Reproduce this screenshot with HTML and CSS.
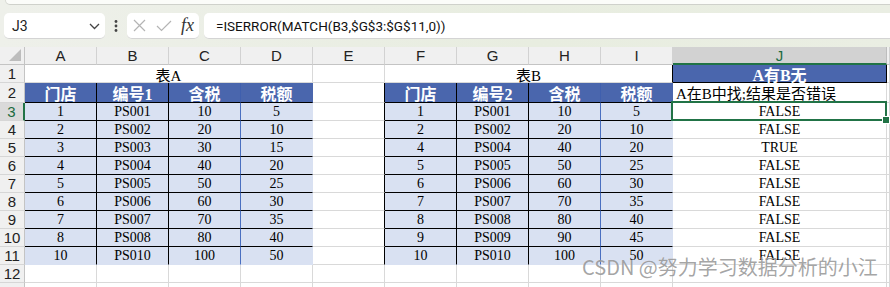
FILE: index.html
```html
<!DOCTYPE html>
<html lang="zh-CN">
<head>
<meta charset="utf-8">
<title>Excel</title>
<link rel="stylesheet" href="styles.css">
</head>
<body>
<div class="app">
  <div class="top">
    <div class="ribbon"></div>
    <div class="fbar">
      <div class="namebox">
        <span class="nb-text">J3</span>
        <svg class="chev" width="11" height="7" viewBox="0 0 11 7"><polyline points="1,1 5.5,5.5 10,1" fill="none" stroke="#444" stroke-width="1.3"/></svg>
      </div>
      <div class="dots">
        <svg width="4" height="12" viewBox="0 0 4 12"><circle cx="2" cy="1.5" r="1.4" fill="#444"/><circle cx="2" cy="6" r="1.4" fill="#444"/><circle cx="2" cy="10.5" r="1.4" fill="#444"/></svg>
      </div>
      <div class="fbtns">
        <svg width="13" height="13" viewBox="0 0 13 13"><path d="M1 1 L12 12 M12 1 L1 12" stroke="#b4b4b4" stroke-width="1.2" fill="none"/></svg>
        <svg width="16" height="12" viewBox="0 0 16 12"><polyline points="1,6 5.5,10.5 15,1" fill="none" stroke="#b4b4b4" stroke-width="1.2"/></svg>
        <span class="fx">fx</span>
      </div>
      <div class="formula">=ISERROR(MATCH(B3,$G$3:$G$11,0))</div>
    </div>
  </div>

  <div class="sheet">
    <!-- column headers -->
    <div class="hd corner"><svg width="12" height="12" viewBox="0 0 12 12"><polygon points="12,0 12,12 0,12" fill="#bdbdbd"/></svg></div>
    <div class="hd">A</div><div class="hd">B</div><div class="hd">C</div><div class="hd">D</div><div class="hd">E</div>
    <div class="hd">F</div><div class="hd">G</div><div class="hd">H</div><div class="hd">I</div><div class="hd hsel">J</div><div class="hd"></div>

    <!-- row 1 -->
    <div class="rh">1</div>
    <div class="c title span4">表A</div>
    <div class="c"></div>
    <div class="c title span4 bk-r">表B</div>
    <div class="c jhead">A有B无</div>
    <div class="c"></div>

    <!-- row 2 -->
    <div class="rh">2</div>
    <div class="c th">门店</div><div class="c th">编号1</div><div class="c th th-c">含税</div><div class="c th th-end">税额</div>
    <div class="c bk-r"></div>
    <div class="c th">门店</div><div class="c th">编号2</div><div class="c th th-c">含税</div><div class="c th th-end">税额</div>
    <div class="c note">A在B中找;结果是否错误</div>
    <div class="c kclip"></div>

    <!-- row 3 -->
    <div class="rh rsel">3</div>
    <div class="c td">1</div><div class="c td">PS001</div><div class="c td bl-r">10</div><div class="c td td-end">5</div>
    <div class="c bk-r"></div>
    <div class="c td">1</div><div class="c td">PS001</div><div class="c td bl-r">10</div><div class="c td td-end">5</div>
    <div class="c val active">FALSE</div>
    <div class="c"></div>

    <!-- row 4 -->
    <div class="rh">4</div>
    <div class="c td">2</div><div class="c td">PS002</div><div class="c td bl-r">20</div><div class="c td td-end">10</div>
    <div class="c bk-r"></div>
    <div class="c td">2</div><div class="c td">PS002</div><div class="c td bl-r">20</div><div class="c td td-end">10</div>
    <div class="c val">FALSE</div>
    <div class="c"></div>

    <!-- row 5 -->
    <div class="rh">5</div>
    <div class="c td">3</div><div class="c td">PS003</div><div class="c td bl-r">30</div><div class="c td td-end">15</div>
    <div class="c bk-r"></div>
    <div class="c td">4</div><div class="c td">PS004</div><div class="c td bl-r">40</div><div class="c td td-end">20</div>
    <div class="c val">TRUE</div>
    <div class="c"></div>

    <!-- row 6 -->
    <div class="rh">6</div>
    <div class="c td">4</div><div class="c td">PS004</div><div class="c td bl-r">40</div><div class="c td td-end">20</div>
    <div class="c bk-r"></div>
    <div class="c td">5</div><div class="c td">PS005</div><div class="c td bl-r">50</div><div class="c td td-end">25</div>
    <div class="c val">FALSE</div>
    <div class="c"></div>

    <!-- row 7 -->
    <div class="rh">7</div>
    <div class="c td">5</div><div class="c td">PS005</div><div class="c td bl-r">50</div><div class="c td td-end">25</div>
    <div class="c bk-r"></div>
    <div class="c td">6</div><div class="c td">PS006</div><div class="c td bl-r">60</div><div class="c td td-end">30</div>
    <div class="c val">FALSE</div>
    <div class="c"></div>

    <!-- row 8 -->
    <div class="rh">8</div>
    <div class="c td">6</div><div class="c td">PS006</div><div class="c td bl-r">60</div><div class="c td td-end">30</div>
    <div class="c bk-r"></div>
    <div class="c td">7</div><div class="c td">PS007</div><div class="c td bl-r">70</div><div class="c td td-end">35</div>
    <div class="c val">FALSE</div>
    <div class="c"></div>

    <!-- row 9 -->
    <div class="rh">9</div>
    <div class="c td">7</div><div class="c td">PS007</div><div class="c td bl-r">70</div><div class="c td td-end">35</div>
    <div class="c bk-r"></div>
    <div class="c td">8</div><div class="c td">PS008</div><div class="c td bl-r">80</div><div class="c td td-end">40</div>
    <div class="c val">FALSE</div>
    <div class="c"></div>

    <!-- row 10 -->
    <div class="rh">10</div>
    <div class="c td">8</div><div class="c td">PS008</div><div class="c td bl-r">80</div><div class="c td td-end">40</div>
    <div class="c bk-r"></div>
    <div class="c td">9</div><div class="c td">PS009</div><div class="c td bl-r">90</div><div class="c td td-end">45</div>
    <div class="c val">FALSE</div>
    <div class="c"></div>

    <!-- row 11 -->
    <div class="rh">11</div>
    <div class="c td last">10</div><div class="c td last">PS010</div><div class="c td last bl-r">100</div><div class="c td last td-end">50</div>
    <div class="c bk-r"></div>
    <div class="c td last">10</div><div class="c td last">PS010</div><div class="c td last bl-r">100</div><div class="c td last td-end">50</div>
    <div class="c val">FALSE</div>
    <div class="c"></div>

    <!-- row 12 -->
    <div class="rh">12</div>
    <div class="c"></div><div class="c"></div><div class="c"></div><div class="c"></div><div class="c"></div>
    <div class="c"></div><div class="c"></div><div class="c"></div><div class="c"></div><div class="c"></div><div class="c"></div>

    <!-- row 13 (partially visible) -->
    <div class="rh"></div>
    <div class="c"></div><div class="c"></div><div class="c"></div><div class="c"></div><div class="c"></div>
    <div class="c"></div><div class="c"></div><div class="c"></div><div class="c"></div><div class="c"></div><div class="c"></div>
  </div>

  <div class="watermark">CSDN @努力学习数据分析的小江</div>
</div>
</body>
</html>
```

FILE: styles.css
```css
html, body {
  margin: 0;
  padding: 0;
}
body {
  width: 890px;
  height: 287px;
  overflow: hidden;
  background: #ffffff;
  font-family: "Liberation Sans", Arial, sans-serif;
}
.app {
  position: relative;
  width: 890px;
  height: 287px;
  overflow: hidden;
}

/* ---------- top (ribbon edge + formula bar) ---------- */
.top {
  height: 47px;
  background: linear-gradient(90deg, #eef0ea 0%, #e8ede0 60%, #eaeee3 100%);
  display: flex;
  flex-direction: column;
}
.ribbon {
  height: 4px;
  margin-left: 5px;
  background: #fbfcf9;
  border-bottom: 1px solid #cfd1cb;
  border-left: 1px solid #d8dad4;
  border-bottom-left-radius: 6px;
}
.fbar {
  display: flex;
  align-items: center;
  height: 26px;
  margin-top: 8px;
  padding-left: 4px;
}
.namebox {
  width: 101px;
  height: 26px;
  box-sizing: border-box;
  background: #fff;
  border-radius: 5px;
  border-bottom: 1px solid #d4d4d4;
  display: flex;
  align-items: center;
  justify-content: space-between;
  padding: 0 5px 0 8px;
}
.nb-text {
  font-family: Roboto, "Liberation Sans", sans-serif;
  font-size: 14px;
  color: #222;
}
.chev {
  margin-top: 2px;
}
.dots {
  width: 22px;
  display: flex;
  justify-content: center;
  align-items: center;
}
.fbtns {
  width: 72px;
  height: 26px;
  box-sizing: border-box;
  background: #fff;
  border-radius: 5px;
  border-bottom: 1px solid #d4d4d4;
  display: flex;
  align-items: center;
  justify-content: space-between;
  padding: 0 5px 0 6px;
  margin-right: 5px;
}
.fx {
  font-family: "Liberation Serif", serif;
  font-style: italic;
  font-size: 18px;
  color: #333;
  line-height: 1;
  margin-bottom: 2px;
}
.formula {
  flex: 1;
  height: 26px;
  box-sizing: border-box;
  background: #fff;
  border-radius: 5px 0 0 5px;
  border-bottom: 1px solid #d4d4d4;
  padding-left: 12px;
  font-family: Roboto, "Liberation Sans", sans-serif;
  font-size: 13.5px;
  line-height: 26px;
  color: #111;
  white-space: nowrap;
}

/* ---------- sheet grid ---------- */
.sheet {
  display: grid;
  grid-template-columns: 25px repeat(9, 72px) 214px 1fr;
  grid-template-rows: 18px 18px 20px repeat(10, 18px) 18px;
  background: #fff;
}
.sheet > div {
  box-sizing: border-box;
  min-width: 0;
}
.hd {
  background: #f0f0f0;
  border-right: 1px solid #d2d2d2;
  border-bottom: 1px solid #c4c4c4;
  display: flex;
  align-items: center;
  justify-content: center;
  font-size: 15px;
  color: #222;
}
.corner {
  justify-content: flex-end;
  align-items: flex-end;
  padding: 0 3px 3px 0;
  border-right-color: #c4c4c4;
}
.hsel {
  background: #d2d2d2;
  color: #1d6b3f;
  border-bottom: 2px solid #217346;
  border-right-color: #bdbdbd;
}
.rh {
  background: #f0f0f0;
  border-right: 1px solid #c4c4c4;
  border-bottom: 1px solid #d6d6d6;
  display: flex;
  align-items: center;
  justify-content: center;
  font-size: 15px;
  color: #222;
}
.rsel {
  background: #dadada;
  color: #1d6b3f;
  border-right: 2px solid #217346;
}
.c {
  border-right: 1px solid #d9d9d9;
  border-bottom: 1px solid #d9d9d9;
  display: flex;
  align-items: center;
  justify-content: center;
  font-family: "Liberation Serif", "Noto Sans CJK SC", serif;
  font-size: 14px;
  color: #000;
  white-space: nowrap;
}
.span4 {
  grid-column: span 4;
}
.title {
  font-size: 15px;
  padding-top: 1px;
}
.bk-r {
  border-right-color: #000;
}
.jhead {
  background: #4a66ad;
  color: #fff;
  font-weight: bold;
  font-size: 16px;
  border-right: 1px solid #000;
  border-bottom: 1px solid #000;
}
.th {
  background: #4a66ad;
  color: #fff;
  font-weight: bold;
  font-size: 16px;
  border-right-color: #000;
  border-bottom-color: #000;
}
.th.th-c {
  border-right-color: #3f5fae;
}
.th.th-end {
  border-right-color: #4a66ad;
}
.td {
  background: #d9e1f2;
  border-right-color: #000;
  border-bottom-color: #000;
}
.td.bl-r {
  border-right-color: #4a6fc0;
}
.td.td-end {
  border-right-color: #d9e1f2;
}
.td.last {
  border-bottom-color: #d9e1f2;
}
.note {
  justify-content: flex-start;
  padding-left: 3px;
  font-size: 15px;
}
.kclip {
  overflow: hidden;
}
.val {
  font-size: 14px;
}
.active {
  position: relative;
}
.active::after {
  content: "";
  position: absolute;
  left: -2px;
  top: -2px;
  right: -1px;
  bottom: -1px;
  border: 2px solid #217346;
  pointer-events: none;
}
.active::before {
  content: "";
  position: absolute;
  right: -4px;
  bottom: -4px;
  width: 6px;
  height: 6px;
  background: #217346;
  border: 1px solid #fff;
  z-index: 2;
}

/* ---------- watermark ---------- */
.watermark {
  position: absolute;
  left: 582px;
  top: 255px;
  font-family: "Noto Sans CJK SC", "Liberation Sans", sans-serif;
  font-size: 20px;
  line-height: 24px;
  color: rgba(130, 130, 130, 0.72);
  text-shadow: 0 0 1px rgba(255, 255, 255, 0.6);
  white-space: nowrap;
}
```
